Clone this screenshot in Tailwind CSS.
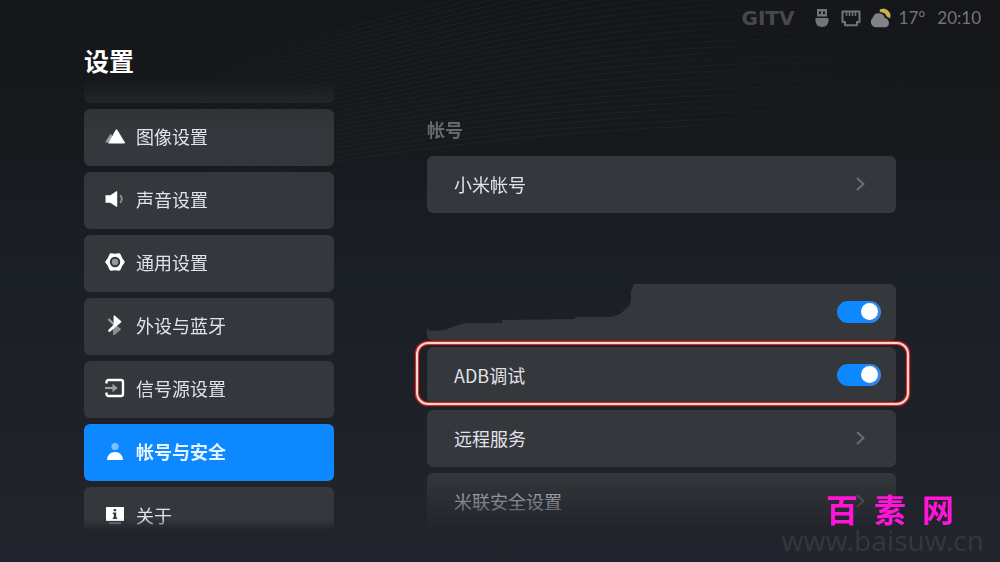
<!DOCTYPE html>
<html lang="zh-CN">
<head>
    <meta charset="UTF-8">
    <meta name="viewport" content="width=device-width, initial-scale=1.0">
    <title>设置</title>
    <script src="https://cdn.jsdelivr.net/npm/@tailwindcss/browser@4"></script>
</head>
<body class="relative h-screen overflow-hidden flex flex-col bg-[linear-gradient(to_bottom,#141619,#17191d_25%,#1b1f26_50%,#1e2127_75%,#23252e)] font-['Noto_Sans_CJK_SC',sans-serif] text-lg text-[#e2e3ea]">
    <!-- Wave lines behind everything -->
    <svg id="waves" class="absolute inset-x-0 top-0 w-full h-[180px] [mask-image:linear-gradient(to_right,transparent_12%,black_38%,black_60%,transparent)]" viewBox="0 0 1000 180" preserveAspectRatio="none" fill="none" stroke="#fff" stroke-opacity=".04" aria-hidden="true"></svg>

    <!-- Status bar -->
    <header class="relative h-9 shrink-0 flex items-center justify-end pr-[19px] text-[#737478] font-[Lato,sans-serif] text-[17px]">
        <span class="w-[73px] font-['DejaVu_Sans',sans-serif] font-bold text-xl text-[#46484c]">GITV</span>
        <svg class="w-[14px] h-[18px] mr-3" viewBox="0 0 14 18" fill="currentColor">
            <path fill-rule="evenodd" d="M2 0h10v7.500H2zM4 2.500v2.500h2V2.500zM8 2.500v2.500h2V2.500z"/>
            <path d="M.5 9h13v3a6 6 0 0 1-6 6h-1a6 6 0 0 1-6-6z"/>
        </svg>
        <svg class="w-5 h-[18px] mr-[10px]" viewBox="0 0 20 18" fill="none" stroke="currentColor" stroke-width="2">
            <path d="M1.500 2.500h17v10.500h-2.500v3.300H4V13H1.500z" stroke-linejoin="round"/>
            <path d="M5.500 3v4M8.500 3v4M11.500 3v4M14.500 3v4" stroke-width="1.500"/>
        </svg>
        <svg class="w-5 h-5 mr-2" viewBox="0 0 20 20">
            <path d="M9.200 1.800A6.800 6.800 0 0 1 18.800 9.800Q17.600 9 16.300 8.600 14.500 4 9.200 3.600z" fill="#c9b355" stroke="#c9b355"/>
            <path d="M5.500 19.200A5.300 5.300 0 0 1 1.800 9.800 6.300 6.300 0 0 1 13.900 9.900 4.900 4.900 0 0 1 15 19.200z" fill="#828388"/>
        </svg>
        <span class="mr-3">17°</span>
        <time>20:10</time>
    </header>

    <main class="relative flex-1 min-h-0 flex pl-[84px] pr-[88px] pb-[31px]">
        <aside class="w-[250px] shrink-0 flex flex-col">
            <h1 class="mt-[9px] h-[34px] shrink-0 leading-[30px] text-[25px] font-bold text-white">设置</h1>
            <nav class="flex-1 min-h-0 overflow-hidden flex flex-col gap-[6px] [mask-image:linear-gradient(to_bottom,transparent,rgb(0_0_0/.4)_23px,rgb(0_0_0/.85)_30px,black_50px,black_calc(100%-12px),transparent)]">
                <div class="-mt-[33px] h-[57px] shrink-0 rounded-md bg-[#34373b]"></div>
                <a href="#picture" class="h-[57px] shrink-0 px-5 pb-1 flex items-center gap-[10px] rounded-md bg-[#34373b]">
                    <svg class="size-[22px]" viewBox="0 0 22 22">
                        <path d="M1 17.500 6 9.500Q6.800 8.500 7.600 9.500L9 17.500z" fill="#9b9da1"/>
                        <path d="M4.200 18.500 11.600 5Q12.500 3.700 13.400 5L20.800 17.200Q21.200 18.500 20 18.500z" fill="#fff"/>
                    </svg>
                    图像设置
                </a>
                <a href="#sound" class="h-[57px] shrink-0 px-5 pb-1 flex items-center gap-[10px] rounded-md bg-[#34373b]">
                    <svg class="size-[22px]" viewBox="0 0 22 22">
                        <path d="M1.500 7.200h4.800L12 3.400q1.200-.8 1.200.6v14q0 1.400-1.200.6L6.300 14.800H1.500z" fill="#fff"/>
                        <path d="M16.200 7.200q3.200 3.800 0 7.800" fill="none" stroke="#8f9195" stroke-width="1.800"/>
                    </svg>
                    声音设置
                </a>
                <a href="#general" class="h-[57px] shrink-0 px-5 pb-1 flex items-center gap-[10px] rounded-md bg-[#34373b]">
                    <svg class="size-[22px]" viewBox="0 0 22 22">
                        <path d="M7 4Q11 4.800 15 4 16.400 8 19 11 16.400 14 15 18 11 17.200 7 18 5.600 14 3 11 5.600 8 7 4z" fill="#fff" stroke="#fff" stroke-width="3.400" stroke-linejoin="round"/>
                        <circle cx="11" cy="11" r="5.200" fill="#34373b"/>
                        <circle cx="11" cy="11" r="3.200" fill="#97999d"/>
                    </svg>
                    通用设置
                </a>
                <a href="#bluetooth" class="h-[57px] shrink-0 px-5 pb-1 flex items-center gap-[10px] rounded-md bg-[#34373b]">
                    <svg class="size-[22px]" viewBox="0 0 22 22">
                        <path d="M4.500 5 10.500 11" fill="none" stroke="#9b9da1" stroke-width="2.200"/>
                        <path d="M9 13 11.500 10.500 16.500 14.500Q17.200 15.200 16.500 15.900L10.500 21H9z" fill="#8b8d91"/>
                        <path d="M9.600 1.500h1L17 7Q17.800 7.700 17 8.400L5.400 18.200 3.800 16.600 9.600 10.800z" fill="#fff"/>
                    </svg>
                    外设与蓝牙
                </a>
                <a href="#source" class="h-[57px] shrink-0 px-5 pb-1 flex items-center gap-[10px] rounded-md bg-[#34373b]">
                    <svg class="size-[22px]" viewBox="0 0 22 22" fill="none">
                        <path d="M2.500 6.500V5q0-2 2-2h12.500q2 0 2 2v12q0 2-2 2H4.500q-2 0-2-2v-1.500" stroke="#fff" stroke-width="2.400"/>
                        <path d="M1 11h8" stroke="#9b9da1" stroke-width="2.200"/>
                        <path d="M8.500 6.800 13.800 11l-5.300 4.200z" fill="#9b9da1"/>
                    </svg>
                    信号源设置
                </a>
                <a href="#account" aria-current="page" class="h-[57px] shrink-0 px-5 pb-1 flex items-center gap-[10px] rounded-md bg-[#0e88ff] font-bold text-[#e6f5ff]">
                    <svg class="size-[22px]" viewBox="0 0 22 22">
                        <circle cx="11" cy="6.500" r="3.600" fill="#7cc2ff"/>
                        <path d="M3 20Q3.800 12 11 12T19 20z" fill="#fff"/>
                    </svg>
                    帐号与安全
                </a>
                <a href="#about" class="h-[57px] shrink-0 px-5 pb-0.5 flex items-center gap-[10px] rounded-md bg-[#34373b]">
                    <svg class="size-[22px]" viewBox="0 0 22 22">
                        <path fill-rule="evenodd" d="M2.500 3h17q.5 0 .5.500v13q0 .5-.5.500h-17q-.5 0-.5-.5v-13q0-.5.500-.5zM9.700 5v2.200h2.400V5zM8.800 8.500v1.500h1v3.500h-1V15h4.400v-1.500h-1v-5z" fill="#fff"/>
                        <path d="M5 19.200h12" stroke="#8b8d91" stroke-width="1.800"/>
                    </svg>
                    关于
                </a>
            </nav>
        </aside>

        <section class="ml-[77px] flex-1 px-4 overflow-hidden [mask-image:linear-gradient(to_top,transparent,black_58px)]">
            <h2 class="mt-[81px] mb-[15px] leading-6 font-bold text-[#66686c]">帐号</h2>
            <a href="#mi-account" class="h-[57px] pl-[27px] pr-[31px] pb-0.5 flex items-center justify-between rounded-md bg-[#34373b]">
                小米帐号
                <svg class="w-[9px] h-[14px]" viewBox="0 0 9 14" fill="none" stroke="#6b6e73" stroke-width="2"><path d="M1 1l6.500 6L1 13"/></svg>
            </a>

            <div class="mt-[71px] flex flex-col gap-[6px]">
                <div class="h-[57px] pr-[15px] pb-0.5 flex items-center justify-end rounded-md bg-[#34373b] [clip-path:polygon(207px_0,100%_0,100%_100%,4px_100%,0_53px,0_44px,3px_47px,18px_46px,28px_42px,39px_39px,75px_39px,75px_36px,148px_35px,148px_33px,184px_33px,193px_30px,202px_22px,204px_17px,204px_7px)]">
                    <input type="checkbox" checked aria-label="开关" class="appearance-none w-11 h-[22px] flex items-center justify-end pr-[3px] rounded-full bg-[linear-gradient(to_right,#0e88ff_60%,#3f86dc)] before:size-[17px] before:rounded-full before:bg-white">
                </div>
                <label class="relative h-[57px] pl-[27px] pr-[15px] pb-0.5 flex items-center justify-between rounded-md bg-[#34373b]">
                    ADB调试
                    <input type="checkbox" checked class="appearance-none w-11 h-[22px] flex items-center justify-end pr-[3px] rounded-full bg-[linear-gradient(to_right,#0e88ff_60%,#3f86dc)] before:size-[17px] before:rounded-full before:bg-white">
                    <!-- Red marker frame -->
                    <span class="absolute -left-[11px] -right-[13px] -top-[5px] -bottom-px rounded-xl border-2 border-[#fbd5cf] shadow-[0_0_0_1px_#d0302a,0_0_2px_1px_#a01414,inset_0_0_0_1px_#d0302a,inset_0_0_2px_1px_#7a1414]"></span>
                </label>
                <a href="#remote" class="h-[57px] pl-[27px] pr-[31px] pb-0.5 flex items-center justify-between rounded-md bg-[#34373b]">
                    远程服务
                    <svg class="w-[9px] h-[14px]" viewBox="0 0 9 14" fill="none" stroke="#6b6e73" stroke-width="2"><path d="M1 1l6.500 6L1 13"/></svg>
                </a>
                <a href="#mi-link" class="h-[57px] pl-[27px] pr-[31px] pb-0.5 flex items-center justify-between rounded-md bg-[#34373b]">
                    米联安全设置
                    <svg class="w-[9px] h-[14px]" viewBox="0 0 9 14" fill="none" stroke="#6b6e73" stroke-width="2"><path d="M1 1l6.500 6L1 13"/></svg>
                </a>
            </div>
        </section>
    </main>

    <!-- Site watermark -->
    <div class="absolute right-4 bottom-2 flex flex-col items-end">
        <p class="mr-[30px] flex gap-4 text-[32px] leading-9 font-bold text-[#ff14d8]"><span>百</span><span>素</span><span>网</span></p>
        <p class="font-['Noto_Sans',sans-serif] text-[28px] leading-7 text-[#34373d]">www.baisuw.cn</p>
    </div>

    <script>
        // Draw the family of wave lines
        const waves = document.getElementById('waves');
        for (let i = 0; i < 30; i++) {
            const path = document.createElementNS('http://www.w3.org/2000/svg', 'path');
            path.setAttribute('d', `M0 ${80 + i * 5} C 330 ${70 + i * 3}, 480 ${-40 + i * 6}, 740 ${-50 + i * 6} S 900 ${-40 + i * 7}, 1000 ${-30 + i * 8}`);
            waves.appendChild(path);
        }
    </script>
</body>
</html>
